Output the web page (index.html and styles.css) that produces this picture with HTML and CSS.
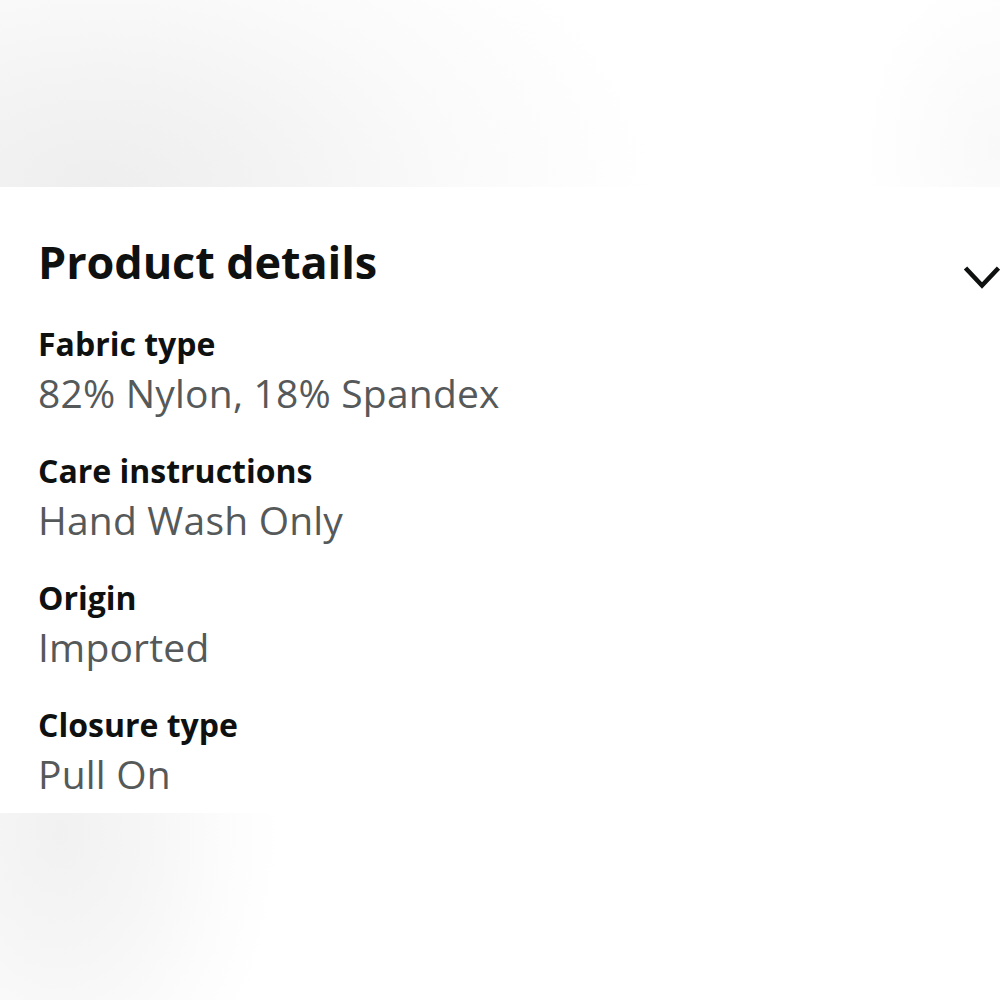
FILE: index.html
```html
<!DOCTYPE html>
<html lang="en">
<head>
<meta charset="utf-8">
<title>Product details</title>
<link rel="stylesheet" href="styles.css">
</head>
<body>
<div class="page">
  <div class="band band-top"></div>
  <section class="panel">
    <header class="panel-head">
      <h1 class="title">Product details</h1>
      <svg class="chevron" viewBox="0 0 38 26" width="38" height="26" aria-hidden="true">
        <path d="M2.5 3 L19 20.5 L35.5 3" fill="none" stroke="#0f1111" stroke-width="4.6" stroke-linecap="butt" stroke-linejoin="miter"/>
      </svg>
    </header>
    <dl class="details">
      <div class="row">
        <dt class="label">Fabric type</dt>
        <dd class="value">82% Nylon, 18% Spandex</dd>
      </div>
      <div class="row">
        <dt class="label">Care instructions</dt>
        <dd class="value">Hand Wash Only</dd>
      </div>
      <div class="row">
        <dt class="label">Origin</dt>
        <dd class="value">Imported</dd>
      </div>
      <div class="row">
        <dt class="label">Closure type</dt>
        <dd class="value">Pull On</dd>
      </div>
    </dl>
  </section>
  <div class="band band-bottom"></div>
</div>
</body>
</html>
```

FILE: styles.css
```css
html, body {
  margin: 0;
  padding: 0;
  background: #ffffff;
}

body {
  width: 1000px;
  height: 1000px;
  overflow: hidden;
  font-family: "Open Sans", "Noto Sans", "Liberation Sans", sans-serif;
  color: #0f1111;
}

.page {
  display: flex;
  flex-direction: column;
  height: 1000px;
}

.band {
  flex: none;
}

.band-top {
  height: 187px;
  background:
    radial-gradient(ellipse 140px 190px at 1000px 150px, #f9f9f9 0%, rgba(255,255,255,0) 100%),
    radial-gradient(ellipse 560px 340px at 100px 190px, #eeeeee 0%, #f3f3f3 30%, #fafafa 62%, #ffffff 100%);
}

.band-bottom {
  flex: 1;
  background:
    radial-gradient(ellipse 220px 320px at 60px 20px, #f1f1f1 0%, #f6f6f6 40%, #fcfcfc 75%, #ffffff 100%);
}

.panel {
  flex: none;
  background: #ffffff;
  padding: 47px 0 11px 38px;
}

.panel-head {
  display: flex;
  justify-content: space-between;
  align-items: flex-start;
  margin-bottom: 32px;
}

.title {
  margin: 0;
  font-size: 45px;
  line-height: 56px;
  font-weight: 700;
  letter-spacing: -0.1px;
  color: #0f1111;
}

.chevron {
  display: block;
  margin-top: 31px;
  margin-right: -1px;
}

.details {
  margin: 0;
  display: flex;
  flex-direction: column;
  gap: 29px;
}

.row {
  display: flex;
  flex-direction: column;
}

.label {
  margin: 0;
  font-size: 32px;
  line-height: 42px;
  font-weight: 700;
  color: #0f1111;
}

.value {
  margin: 0;
  font-size: 39px;
  line-height: 56px;
  font-weight: 400;
  letter-spacing: 0.2px;
  color: #565959;
}
```
